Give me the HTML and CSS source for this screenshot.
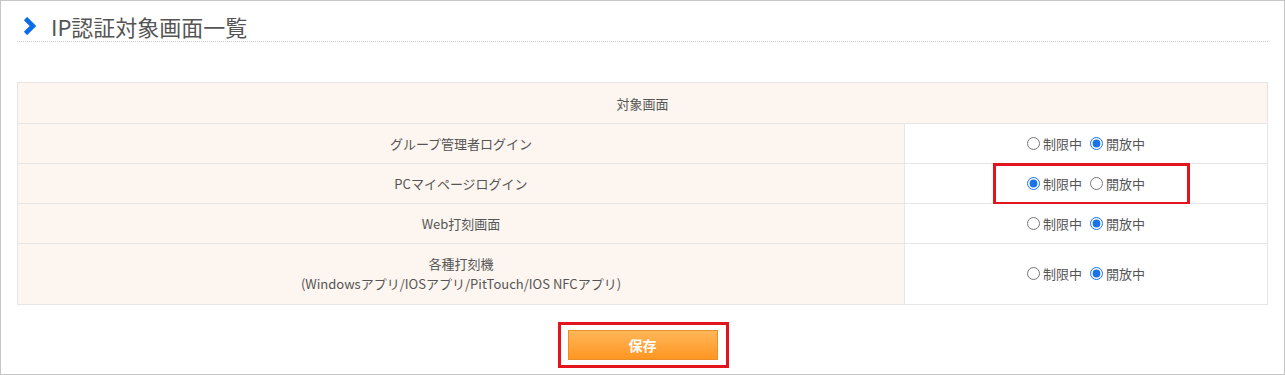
FILE: index.html
```html
<!DOCTYPE html>
<html lang="ja">
<head>
    <meta charset="UTF-8">
    <title>IP認証対象画面一覧</title>
    <link rel="stylesheet" href="styles.css">
</head>
<body>
    <div class="page">
        <h1 class="page-title">
            <svg class="title-arrow" width="14" height="18" viewBox="0 0 14 18">
                <polyline points="2.5,1.5 10,9 2.5,16.5" fill="none" stroke="#0a6ce8" stroke-width="4.6"/>
            </svg>
            <span>IP認証対象画面一覧</span>
        </h1>

        <table class="ip-table">
            <tr>
                <th colspan="2">対象画面</th>
            </tr>
            <tr>
                <td class="name">グループ管理者ログイン</td>
                <td class="state">
                    <label><input type="radio" name="r1">制限中</label>
                    <label><input type="radio" name="r1" checked>開放中</label>
                </td>
            </tr>
            <tr>
                <td class="name">PCマイページログイン</td>
                <td class="state marked">
                    <label><input type="radio" name="r2" checked>制限中</label>
                    <label><input type="radio" name="r2">開放中</label>
                    <span class="mark mark-radio"></span>
                </td>
            </tr>
            <tr>
                <td class="name">Web打刻画面</td>
                <td class="state">
                    <label><input type="radio" name="r3">制限中</label>
                    <label><input type="radio" name="r3" checked>開放中</label>
                </td>
            </tr>
            <tr>
                <td class="name tall">各種打刻機<br>(Windowsアプリ/IOSアプリ/PitTouch/IOS NFCアプリ)</td>
                <td class="state">
                    <label><input type="radio" name="r4">制限中</label>
                    <label><input type="radio" name="r4" checked>開放中</label>
                </td>
            </tr>
        </table>

        <div class="actions">
            <div class="save-wrap">
                <button class="save-button">保存</button>
                <span class="mark mark-button"></span>
            </div>
        </div>
    </div>
</body>
</html>
```

FILE: styles.css
```css
body {
    margin: 0;
    font-family: "Noto Sans CJK JP", "Noto Sans", sans-serif;
    color: #555555;
    background: #ffffff;
}

.page {
    box-sizing: border-box;
    height: 375px;
    border: 1px solid #c6c6c6;
    padding: 0 16px;
}

.page-title {
    display: flex;
    align-items: center;
    margin: 0;
    padding: 10px 0 0 6px;
    height: 30px;
    font-size: 22px;
    font-weight: 400;
    color: #555555;
    border-bottom: 1px dotted #cfcfcf;
}

.title-arrow {
    margin-right: 14px;
}

/* Table */
.ip-table {
    width: 100%;
    margin-top: 40px;
    border-collapse: collapse;
    font-size: 13px;
}

.ip-table th,
.ip-table td {
    border: 1px solid #e6e6e6;
    text-align: center;
    height: 39px;
    padding: 0;
    font-weight: 400;
}

.ip-table th {
    background: #fdf5ef;
    height: 40px;
}

.ip-table td.name {
    background: #fdf5ef;
    width: 886px;
}

.ip-table td.tall {
    height: 60px;
    line-height: 20px;
}

.state {
    position: relative;
    background: #ffffff;
}

.state label {
    display: inline-flex;
    align-items: center;
}

.state input {
    width: 13px;
    height: 13px;
    margin: 0 3px 0 0;
    accent-color: #1a73e8;
}

.state label + label {
    margin-left: 5px;
}

/* Red highlight boxes */
.mark {
    position: absolute;
    border: 3px solid #e3141d;
    box-sizing: border-box;
}

.mark-radio {
    left: 88px;
    top: -1px;
    width: 197px;
    height: 42px;
}

/* Button */
.actions {
    display: flex;
    justify-content: center;
    padding-top: 25px;
}

.save-wrap {
    position: relative;
}

.save-button {
    width: 150px;
    height: 30px;
    border: 1px solid #e8902a;
    background: linear-gradient(#ffb659, #ff9622);
    color: #ffffff;
    font-family: "Noto Sans CJK JP", sans-serif;
    font-size: 14px;
    font-weight: 700;
    cursor: pointer;
}

.mark-button {
    left: -10px;
    top: -8px;
    width: 171px;
    height: 46px;
}
```
